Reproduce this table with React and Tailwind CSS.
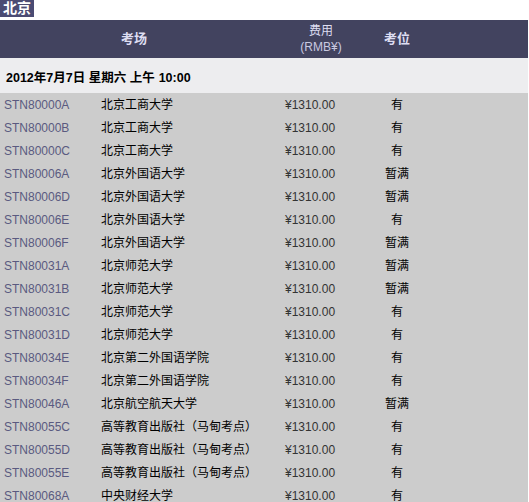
const rows = [
  ["STN80000A", "北京工商大学", "有"],
  ["STN80000B", "北京工商大学", "有"],
  ["STN80000C", "北京工商大学", "有"],
  ["STN80006A", "北京外国语大学", "暂满"],
  ["STN80006D", "北京外国语大学", "暂满"],
  ["STN80006E", "北京外国语大学", "有"],
  ["STN80006F", "北京外国语大学", "暂满"],
  ["STN80031A", "北京师范大学", "暂满"],
  ["STN80031B", "北京师范大学", "暂满"],
  ["STN80031C", "北京师范大学", "有"],
  ["STN80031D", "北京师范大学", "有"],
  ["STN80034E", "北京第二外国语学院", "有"],
  ["STN80034F", "北京第二外国语学院", "有"],
  ["STN80046A", "北京航空航天大学", "暂满"],
  ["STN80055C", "高等教育出版社（马甸考点）", "有"],
  ["STN80055D", "高等教育出版社（马甸考点）", "有"],
  ["STN80055E", "高等教育出版社（马甸考点）", "有"],
  ["STN80068A", "中央财经大学", "有"],
];

const App = () => {
  return (
    <div
      className="w-[529px] h-[502px] overflow-hidden bg-white"
      style={{ fontFamily: '"Liberation Sans", "Noto Sans CJK SC", sans-serif' }}
    >
      <div className="w-fit bg-[#4b4b73] text-white font-bold text-[14px] leading-[17px] px-[3px]">
        北京
      </div>
      <div className="w-[528px] mt-[3px]">
        {/* header */}
        <div className="flex h-[38px] bg-[#42435f] text-[#dedef2] text-[12px]">
          <div className="w-[281px] pr-[13px] flex items-center justify-center font-bold text-[13px]">考场</div>
          <div className="w-[80px] flex flex-col items-center justify-center leading-[16px]">
            <span>费用</span>
            <span className="text-[#c9c9e0]">(RMB¥)</span>
          </div>
          <div className="w-[72px] flex items-center justify-center font-bold text-[13px]">考位</div>
          <div className="flex-1"></div>
        </div>
        {/* date */}
        <div className="h-[35px] bg-[#ededef] flex items-center pl-[6px] pt-[5px] text-[12.5px] text-black">
          <span className="font-bold">2012年7月7日 星期六 上午</span>
          <span className="ml-[4px] font-semibold">10:00</span>
        </div>
        {/* rows */}
        <div className="bg-[#cccccc] text-[12px]">
          {rows.map(([code, name, seat]) => (
            <div key={code} className="flex h-[23px] items-center">
              <div className="w-[97px] pl-[4px] text-[#5a5a80]">{code}</div>
              <div className="w-[184px] pl-[4px] text-black">{name}</div>
              <div className="w-[80px] pl-[4px] text-[#333]">¥1310.00</div>
              <div className="w-[72px] text-center text-black">{seat}</div>
              <div className="flex-1"></div>
            </div>
          ))}
        </div>
      </div>
    </div>
  );
};

export default App;
